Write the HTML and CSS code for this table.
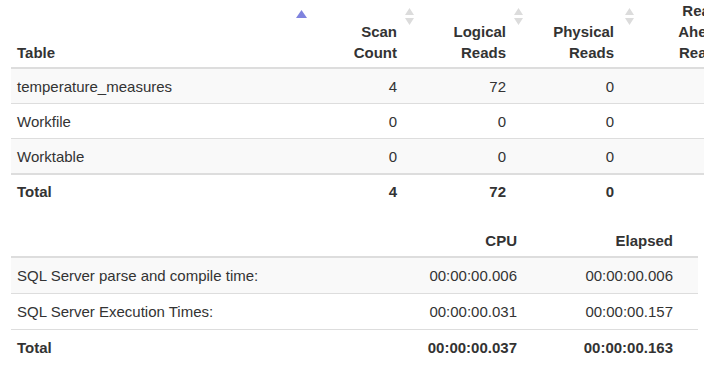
FILE: index.html
```html
<!DOCTYPE html>
<html lang="en">
<head>
<meta charset="utf-8">
<title>Statistics</title>
<link rel="stylesheet" href="styles.css">
</head>
<body>
<div class="page">
  <table class="stats stats--io">
    <colgroup>
      <col class="col-table">
      <col class="col-scan">
      <col class="col-logical">
      <col class="col-physical">
      <col class="col-readahead">
      <col class="col-extra">
    </colgroup>
    <thead>
      <tr>
        <th class="sortable">Table
          <svg class="sort-icon sort-icon--asc" width="11" height="8" viewBox="0 0 11 8"><path d="M5.5 0 L11 8 L0 8 Z" fill="#7f83de"/></svg>
        </th>
        <th class="num sortable">Scan<br>Count
          <svg class="sort-icon" width="11" height="17" viewBox="0 0 11 17"><path d="M5.5 0 L10 7 L1 7 Z M1 10 L10 10 L5.5 17 Z" fill="#dcdcdc"/></svg>
        </th>
        <th class="num sortable">Logical<br>Reads
          <svg class="sort-icon" width="11" height="17" viewBox="0 0 11 17"><path d="M5.5 0 L10 7 L1 7 Z M1 10 L10 10 L5.5 17 Z" fill="#dcdcdc"/></svg>
        </th>
        <th class="num sortable">Physical<br>Reads
          <svg class="sort-icon sort-icon--tight" width="11" height="17" viewBox="0 0 11 17"><path d="M5.5 0 L10 7 L1 7 Z M1 10 L10 10 L5.5 17 Z" fill="#dcdcdc"/></svg>
        </th>
        <th class="num sortable">Read-<br>Ahead<br>Reads
          <svg class="sort-icon" width="11" height="17" viewBox="0 0 11 17"><path d="M5.5 0 L10 7 L1 7 Z M1 10 L10 10 L5.5 17 Z" fill="#dcdcdc"/></svg>
        </th>
        <th class="num sortable">LOB<br>Logical<br>Reads
          <svg class="sort-icon" width="11" height="17" viewBox="0 0 11 17"><path d="M5.5 0 L10 7 L1 7 Z M1 10 L10 10 L5.5 17 Z" fill="#dcdcdc"/></svg>
        </th>
      </tr>
    </thead>
    <tbody>
      <tr><td>temperature_measures</td><td class="num">4</td><td class="num">72</td><td class="num">0</td><td class="num">0</td><td class="num">0</td></tr>
      <tr><td>Workfile</td><td class="num">0</td><td class="num">0</td><td class="num">0</td><td class="num">0</td><td class="num">0</td></tr>
      <tr><td>Worktable</td><td class="num">0</td><td class="num">0</td><td class="num">0</td><td class="num">0</td><td class="num">0</td></tr>
    </tbody>
    <tfoot>
      <tr><td>Total</td><td class="num">4</td><td class="num">72</td><td class="num">0</td><td class="num">0</td><td class="num">0</td></tr>
    </tfoot>
  </table>

  <table class="stats stats--time">
    <colgroup>
      <col>
      <col class="col-time">
      <col class="col-time">
    </colgroup>
    <thead>
      <tr><th></th><th class="num">CPU</th><th class="num">Elapsed</th></tr>
    </thead>
    <tbody>
      <tr><td>SQL Server parse and compile time:</td><td class="num">00:00:00.006</td><td class="num">00:00:00.006</td></tr>
      <tr><td>SQL Server Execution Times:</td><td class="num">00:00:00.031</td><td class="num">00:00:00.157</td></tr>
    </tbody>
    <tfoot>
      <tr><td>Total</td><td class="num">00:00:00.037</td><td class="num">00:00:00.163</td></tr>
    </tfoot>
  </table>
</div>
</body>
</html>
```

FILE: styles.css
```css
* {
  box-sizing: border-box;
}

html,
body {
  margin: 0;
  padding: 0;
}

body {
  font-family: "Liberation Sans", Arial, Helvetica, sans-serif;
  font-size: 15px;
  line-height: 21px;
  color: #333;
  background: #fff;
  overflow: hidden;
}

.page {
  padding: 0 6px 0 11px;
}

.stats {
  border-collapse: collapse;
  border-spacing: 0;
  table-layout: fixed;
}

.stats th {
  position: relative;
  font-weight: bold;
  text-align: left;
  vertical-align: bottom;
  border-bottom: 2px solid #ddd;
}

.stats td {
  padding: 7px 6px 6px 6px;
  border-top: 1px solid #ddd;
}

.stats tbody tr:first-child td {
  border-top: 0;
}

.stats tbody tr:nth-child(odd) {
  background: #f9f9f9;
}

.stats tfoot td {
  font-weight: bold;
}

.stats .num {
  text-align: right;
}

/* IO table */
.stats--io {
  width: 855px;
  margin-bottom: 16px;
}

.stats--io th {
  padding: 0 22px 4px 6px;
}

.stats--io td.num {
  padding-right: 22px;
}

.stats--io tfoot td {
  border-top: 2px solid #ddd;
  padding-top: 6px;
}

.col-table { width: 300px; }
.col-scan { width: 108px; }
.col-logical { width: 109px; }
.col-physical { width: 108px; }
.col-readahead { width: 110px; }
.col-extra { width: 120px; }

.sort-icon {
  position: absolute;
  top: 8px;
  right: 4px;
  display: block;
}

.sort-icon--asc {
  top: 10px;
}

.sort-icon--tight {
  right: 1px;
}

/* Time table */
.stats--time {
  width: 100%;
}

.stats--time th {
  padding: 6px 25px 5px 6px;
}

.stats--time td {
  padding-bottom: 7px;
}

.stats--time td.num {
  padding-right: 25px;
}

.col-time {
  width: 156px;
}
```
